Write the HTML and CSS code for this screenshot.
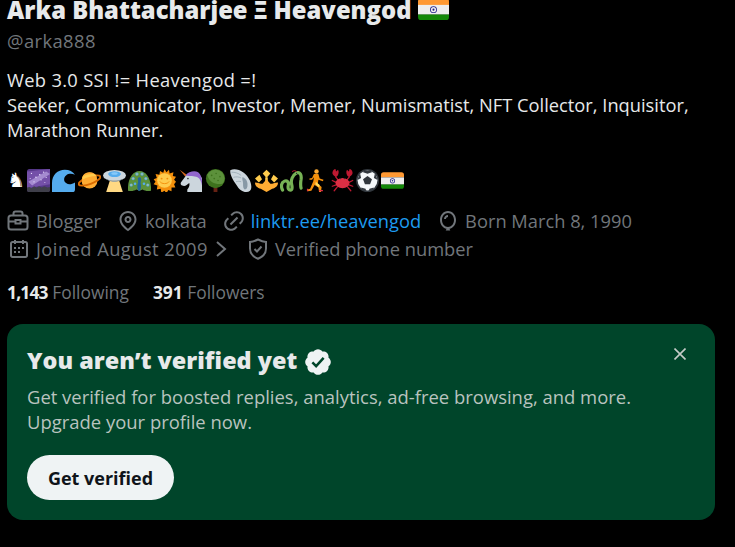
FILE: index.html
```html
<!DOCTYPE html>
<html lang="en">
<head><meta charset="utf-8"><title>Profile</title><link rel="stylesheet" href="styles.css"></head>
<body>
<svg class="sprite" aria-hidden="true">
  <symbol id="e-flag" viewBox="0 0 36 36"><path d="M36 27a4 4 0 0 1-4 4H4a4 4 0 0 1-4-4v-3h36z" fill="#138808"/><path d="M36 13H0V9a4 4 0 0 1 4-4h28a4 4 0 0 1 4 4z" fill="#f93"/><path d="M0 13h36v11H0z" fill="#eee"/><circle cx="18" cy="18.500" r="4" fill="#20208a"/><circle cx="18" cy="18.500" r="3" fill="#eee"/><circle cx="18" cy="18.500" r="1.200" fill="#20208a"/></symbol>
</svg>
<main class="page">
  <h1 class="name">Arka Bhattacharjee Ξ Heavengod <svg class="flag-big" viewBox="0 5 36 26"><use href="#e-flag" width="36" height="36"/></svg></h1>
  <div class="handle">@arka888</div>
  <p class="bio"><span class="bio-first">Web 3.0 SSI != Heavengod =!</span><br>Seeker, Communicator, Investor, Memer, Numismatist, NFT Collector, Inquisitor,<br>Marathon Runner.</p>
  <div class="emojis">
    <span class="knight">♞</span>
    <svg class="emoji" viewBox="0 0 36 36"><rect width="36" height="36" rx="4" fill="#553788"/><path d="M0 4 36 0v24L0 30z" fill="#7450a8"/><path d="M2 20 30 4l6 4L8 26z" fill="#a58bd0"/><g fill="#e8e0ff"><circle cx="7" cy="7" r="1"/><circle cx="14" cy="13" r="1.200"/><circle cx="20" cy="9" r="1.200"/><circle cx="26" cy="5" r="1"/><circle cx="30" cy="13" r="1"/><circle cx="11" cy="20" r="1"/><circle cx="22" cy="17" r="1"/><circle cx="5" cy="15" r=".8"/><circle cx="28" cy="21" r=".8"/></g><path d="M0 32v-3l4-1 3 2 4-3 4 2 4-2 4 2 4-2 5 2 4-1v4a4 4 0 0 1-4 4H4a4 4 0 0 1-4-4z" fill="#3f3f4a"/></svg>
    <svg class="emoji" viewBox="0 0 36 36"><path d="M0 36V22C0 9 9 1 20 1c7 0 13 3 16 8-5-2-10-2-14 1-4 3-4 9 0 12 4 3 9 2 14-1v11a4 4 0 0 1-4 4z" fill="#55acee"/></svg>
    <svg class="emoji" viewBox="0 0 36 36"><circle cx="18" cy="18" r="12.500" fill="#ffac33"/><ellipse cx="18" cy="18" rx="18" ry="5.500" fill="none" stroke="#d96a00" stroke-width="3" transform="rotate(-20 18 18)"/><path d="M6.200 14a12.500 12.500 0 0 1 23.500-1L6.500 20z" fill="#ffac33"/><path d="M8 11.500c6-3 13-4.500 19-3l1.500 2.500C21 11 14 13 7 16.500z" fill="#ffcc4d"/></svg>
    <svg class="emoji" viewBox="0 0 36 36"><path d="M12 14h12l7 22H5z" fill="#ffd983"/><ellipse cx="18" cy="10" rx="18" ry="8.500" fill="#ccd6dd"/><path d="M.5 12c3 4 10 6 17.500 6s14.500-2 17.500-6C33 15 26 20 18 20S3 15 .5 12z" fill="#8899a6"/><ellipse cx="18" cy="8" rx="10" ry="4.500" fill="#55acee"/><ellipse cx="18" cy="7" rx="5" ry="2" fill="#88c9f9"/></svg>
    <svg class="emoji" viewBox="0 0 36 36"><path d="M0 34C-1 16 7 3 18 3s19 13 18 31c-6 1-10 0-13-2l-5 2-5-2c-3 2-7 3-13 2z" fill="#5c913b"/><g fill="#55acee"><circle cx="5" cy="25" r="2.500"/><circle cx="8" cy="15" r="2.500"/><circle cx="14" cy="8" r="2.500"/><circle cx="22" cy="8" r="2.500"/><circle cx="28" cy="15" r="2.500"/><circle cx="31" cy="25" r="2.500"/><circle cx="11" cy="23" r="2"/><circle cx="25" cy="23" r="2"/></g><g fill="#ffcc4d"><circle cx="5" cy="25" r="1"/><circle cx="8" cy="15" r="1"/><circle cx="14" cy="8" r="1"/><circle cx="22" cy="8" r="1"/><circle cx="28" cy="15" r="1"/><circle cx="31" cy="25" r="1"/></g><path d="M18 13c-2 0-3 2-2.500 4 .3 1.500 1 3-.5 7-1 3 0 8 1 10h3c1-3 2-7 1-10-1-3 .8-6 .5-8-.2-2-1.200-3-2.500-3z" fill="#226699"/></svg>
    <svg class="emoji" viewBox="0 0 36 36"><path d="M18 0l3 5 4-4 1 6 6-2-1 6 5 1-3 5 3 3-3 4 2 5-6 0 0 6-5-2-3 5-3-4-5 3-1-6-6 1 1-6-6-2 3-4-3-4 5-2-2-6 6 1 1-6 5 3z" fill="#f4900c"/><circle cx="18" cy="18" r="11.500" fill="#ffcc4d"/><circle cx="13.500" cy="15" r="1.500" fill="#f4900c"/><circle cx="22.500" cy="15" r="1.500" fill="#f4900c"/><path d="M11 20c2 4 12 4 14 0" fill="none" stroke="#f4900c" stroke-width="1.500" stroke-linecap="round"/></svg>
    <svg class="emoji" viewBox="0 0 36 36"><path d="M1 1l11 8-2 3z" fill="#d86a1c"/><path d="M11 10c-2 3-5 7-8 11-1 2 0 4 2 5 2 1 5 1 7-1l4-3c1 3 0 7-3 10v4h24V20c0-6-3-10-9-11-6-2-12-1-17 1z" fill="#ccd6dd"/><path d="M10 10c5-6 14-8 20-5 4 3 6 9 6 15v6c-1-6-3-11-7-13-6-3-11-1-19-3z" fill="#9266cc"/><circle cx="14" cy="15" r="1.300" fill="#292f33"/></svg>
    <svg class="emoji" viewBox="0 0 36 36"><path d="M15 27h6v9h-6z" fill="#662113"/><circle cx="18" cy="15" r="15" fill="#3e721d"/><path d="M18 1c8 0 14 6 14 14 0 3-1 6-3 8C20 25 8 22 5 9c3-5 8-8 13-8z" fill="#5c913b"/><g fill="#3e721d"><circle cx="12" cy="10" r="1.300"/><circle cx="19" cy="7" r="1.300"/><circle cx="25" cy="12" r="1.300"/><circle cx="16" cy="15" r="1.300"/><circle cx="22" cy="18" r="1.300"/></g></svg>
    <svg class="emoji" viewBox="0 0 36 36"><path d="M2 2c6-3 14-1 20 3 7 5 13 14 13 23 0 5-3 8-8 8-6 0-11-4-14-9C8 20 1 10 2 2z" fill="#ccd6dd"/><path d="M21 13c5 1 8 6 8 11s-1 8-4 8c-3-1-3-6-3-9 0-4-2-7-1-10z" fill="#8899a6"/><path d="M4 5c5 0 10 1 15 5M7 13c4-1 8-1 12 1M11 20c3-1 6-1 8 0" stroke="#99aab5" stroke-width="1.300" fill="none"/></svg>
    <svg class="emoji" viewBox="0 0 36 36"><path d="M18 1l6 6-6 7-6-7z" fill="#ffcc4d"/><path d="M16 13h4v8h-4z" fill="#ffcc4d"/><path d="M29 9l7 6-6 6-5-5zM7 9l-7 6 6 6 5-5z" fill="#ffcc4d"/><path d="M0 21c6 0 10 3 12 2l6-7 6 7c2 1 6-2 12-2 0 6-4 8-9 10l-9 5-9-5c-5-2-9-4-9-10z" fill="#ffac33"/></svg>
    <svg class="emoji" viewBox="0 0 36 36"><path d="M4 33c-3-6-2-12 3-14 4-2 7 2 6 6-1 5 0 8 3 8 4 0 3-6 2-10-1-5 1-13 8-17 5-2 8 3 7 10-1 6-1 10 0 14" fill="none" stroke="#77b255" stroke-width="5" stroke-linecap="round" stroke-linejoin="round"/><path d="M26 4c-2-1-3-2-5-1l-2 1" fill="none" stroke="#be1931" stroke-width="1.500"/><circle cx="26" cy="7" r="1" fill="#292f33"/></svg>
    <svg class="emoji" viewBox="0 0 36 36"><circle cx="18" cy="4" r="3.500" fill="#ffac33"/><path d="M14 8h7l2 7 6 2-1 2-7-2-1 6 6 5-1 8h-3l-1-7-6-4-5 9-6 1v-3l4-1 5-12 1-6-3 4-4 0v-2l4-1z" fill="#f4900c"/><path d="M22 33h6v2h-6zM5 31H3v4h2z" fill="#dd2e44"/><path d="M17 20l6 5-1 4-6-5z" fill="#ffdc5d"/></svg>
    <svg class="emoji" viewBox="0 0 36 36"><g fill="none" stroke="#be1931" stroke-width="2" stroke-linecap="round"><path d="M8 21L2 18M8 25l-6 2M10 28l-5 6M28 21l6-3M28 25l6 2M26 28l5 6M11 17L7 12M25 17l4-5"/></g><ellipse cx="18" cy="22" rx="11" ry="8" fill="#dd2e44"/><path d="M9 12c-6-1-8-5-6-9 1-2 3-3 4-3l1 4 3-3c2 3 1 8-2 11zM27 12c6-1 8-5 6-9-1-2-3-3-4-3l-1 4-3-3c-2 3-1 8 2 11z" fill="#be1931"/><circle cx="15" cy="15" r="1" fill="#292f33"/><circle cx="21" cy="15" r="1" fill="#292f33"/></svg>
    <svg class="emoji" viewBox="0 0 36 36"><circle cx="18" cy="18" r="18" fill="#31373d"/><circle cx="18" cy="18" r="15.500" fill="#f5f8fa"/><path d="M18 11l7 5-3 8h-8l-3-8zM18 2.500c3 0 6 .8 8 2l-8 3-8-3c2-1.200 5-2 8-2zM3 17c0-4 1.500-7 3.500-9.500L8 14zM33 17c0-4-1.500-7-3.500-9.500L28 14zM8 29l7 2 1 3.500c-3-.5-6-2-8-5.500zM28 29l-7 2-1 3.500c3-.5 6-2 8-5.500z" fill="#31373d"/></svg>
    <svg class="emoji" viewBox="0 0 36 36"><use href="#e-flag" width="36" height="36"/></svg>
  </div>
  <div class="meta meta-first">
    <span class="item"><svg class="icon" viewBox="0 0 24 24"><rect x="1.500" y="6.500" width="19" height="14" rx="2.500" class="line"/><path d="M6.500 6.500V4.500a2 2 0 0 1 2-2h5a2 2 0 0 1 2 2v2M1.500 12.500h7M13.500 12.500h7M8.500 11h5v3.500h-5z" class="line"/></svg>Blogger</span>
    <span class="item"><svg class="icon" viewBox="0 0 24 24"><path d="M12 7c-1.930 0-3.500 1.570-3.500 3.500S10.070 14 12 14s3.500-1.570 3.500-3.500S13.930 7 12 7zm0 5c-.827 0-1.500-.673-1.500-1.500S11.173 9 12 9s1.500.673 1.500 1.500S12.827 12 12 12zm0-10c-4.687 0-8.500 3.813-8.500 8.500 0 5.967 7.621 11.116 7.945 11.332l.555.370.555-.370c.324-.216 7.945-5.365 7.945-11.332C20.500 5.813 16.687 2 12 2zm0 17.770c-1.665-1.241-6.500-5.196-6.500-9.270C5.500 6.916 8.416 4 12 4s6.500 2.916 6.500 6.500c0 4.073-4.835 8.028-6.500 9.270z"/></svg>kolkata</span>
    <span class="item"><svg class="icon" viewBox="0 0 24 24"><path d="M18.360 5.640c-1.950-1.960-5.110-1.960-7.070 0L9.880 7.050 8.460 5.640l1.420-1.420c2.730-2.730 7.160-2.730 9.900 0 2.730 2.740 2.730 7.170 0 9.900l-1.420 1.420-1.410-1.420 1.410-1.410c1.960-1.960 1.960-5.120 0-7.070zm-2.120 3.530l-7.070 7.070-1.410-1.410 7.070-7.070 1.410 1.410zm-12.020.710l1.420-1.420 1.410 1.420-1.410 1.410c-1.960 1.960-1.960 5.120 0 7.070 1.950 1.960 5.110 1.960 7.070 0l1.410-1.410 1.420 1.410-1.420 1.420c-2.730 2.730-7.160 2.730-9.900 0-2.730-2.740-2.730-7.170 0-9.900z"/></svg><a class="link">linktr.ee/heavengod</a></span>
    <span class="item"><svg class="icon" viewBox="0 0 24 24"><path d="M8 10c0-2.210 1.790-4 4-4v2c-1.100 0-2 .9-2 2H8zm12 1c0 4.270-2.690 8.010-6.550 8.830l.820 1.670H9.730l.820-1.670C6.690 19.010 4 15.270 4 11c0-4.850 3.440-9 8-9s8 4.150 8 9zm-8-7c-3.310 0-6 3.100-6 7s2.690 7 6 7 6-3.100 6-7-2.690-7-6-7z"/></svg>Born March 8, 1990</span>
  </div>
  <div class="meta meta-second">
    <span class="item"><svg class="icon" viewBox="0 0 24 24"><path d="M7 4V3h2v1h6V3h2v1h1.500C19.890 4 21 5.120 21 6.500v12c0 1.380-1.110 2.500-2.500 2.500h-13C4.120 21 3 19.880 3 18.500v-12C3 5.120 4.120 4 5.500 4H7zm0 2H5.500c-.270 0-.500.220-.500.500v12c0 .280.230.500.500.500h13c.280 0 .500-.220.500-.500v-12c0-.280-.220-.500-.500-.500H17v1h-2V6H9v1H7V6zm0 6h2v-2H7v2zm0 4h2v-2H7v2zm4-4h2v-2h-2v2zm0 4h2v-2h-2v2zm4-4h2v-2h-2v2z"/></svg><span class="joined">Joined August 2009</span><svg class="chevron" viewBox="0 0 18 24"><path d="M4 5l8 7-8 7" class="line"/></svg></span>
    <span class="item"><svg class="icon" viewBox="0 0 24 24"><path d="M12 2.500c3 1.500 5.500 2.300 8 2.500v6.500c0 4.800-3.300 8.300-8 10.200-4.700-1.900-8-5.400-8-10.200V5c2.500-.2 5-1 8-2.500z" class="line"/><path d="M8.500 12l2.500 2.500 4.500-5" class="line"/></svg>Verified phone number</span>
  </div>
  <div class="stats"><span><b class="num-tight">1,143</b> Following</span><span><b class="num">391</b> Followers</span></div>
  <section class="card">
    <svg class="close" viewBox="0 0 12 12"><path d="M.5.500l11 11M11.500.500l-11 11"/></svg>
    <h2 class="card-title">You aren’t verified yet <svg class="badge" viewBox="0 0 24 24"><path d="M8.520 3.590c.8-1.100 2.040-1.840 3.480-1.840s2.680.74 3.490 1.840c1.340-.21 2.740.14 3.760 1.160s1.360 2.410 1.160 3.750c1.100.81 1.840 2.060 1.840 3.500s-.74 2.680-1.840 3.490c.2 1.340-.14 2.730-1.160 3.750s-2.410 1.360-3.750 1.160c-.81 1.100-2.060 1.840-3.500 1.840s-2.680-.74-3.490-1.840c-1.340.21-2.740-.14-3.760-1.160-1.010-1.020-1.360-2.410-1.150-3.750C2.490 14.680 1.750 13.430 1.750 12s.74-2.680 1.840-3.490c-.21-1.340.14-2.740 1.160-3.750 1.010-1.020 2.410-1.360 3.770-1.170z" fill="#eff3f4"/><path d="M7.500 12.300l3 3 6-6.600" fill="none" stroke="#00452a" stroke-width="2"/></svg></h2>
    <p class="card-text">Get verified for boosted replies, analytics, ad-free browsing, and more.<br>Upgrade your profile now.</p>
    <button class="cta">Get verified</button>
  </section>
  <nav class="tabs"><span>Posts</span><span>Replies</span><span>Highlights</span><span>Articles</span><span>Media</span><span>Likes</span></nav>
</main>
</body>
</html>
```
FILE: styles.css
```css
html,body{margin:0;background:#000;height:100%;overflow:hidden}
body{font-family:"Open Sans","Liberation Sans",sans-serif;color:#e7e9ea}
.sprite{display:none}
.page{padding:0 20px 0 7px}
.name{margin:-6px 0 0;font-size:23.800px;line-height:32px;font-weight:800;white-space:nowrap}
.flag-big{width:31px;height:22.400px;vertical-align:-1px}
.handle{font-size:18.400px;letter-spacing:.4px;color:#71767b;line-height:24px;margin-top:3px}
.bio{font-size:18.300px;line-height:25px;margin:14px 0 0}
.bio-first{letter-spacing:.34px}
.emojis{display:flex;align-items:center;gap:2.300px;margin-top:26px;height:24px}
.knight{font:20px "DejaVu Sans",sans-serif;width:17.700px;color:#fff;text-align:right}
.emoji{width:23px;height:23px;flex:none}
.meta{display:flex;gap:15px;font-size:18.300px;color:#71767b;line-height:24px}
.meta-first{margin-top:17px}
.meta-second{margin-top:4px}
.joined{letter-spacing:.46px}
.item{display:inline-flex;align-items:center;gap:5px;white-space:nowrap}
.icon{width:24px;height:24px;fill:#71767b;flex:none}
.line{fill:none;stroke:#71767b;stroke-width:2}
.chevron{width:18px;height:24px;flex:none}
.link{color:#1d9bf0}
.stats{display:flex;gap:24px;font-size:17.400px;line-height:24px;color:#71767b;margin-top:19px}
.num{color:#e7e9ea}
.num-tight{color:#e7e9ea;letter-spacing:-.8px}
.card{position:relative;background:#00452a;border-radius:16px;width:708px;height:196px;padding:20px;box-sizing:border-box;margin-top:20px}
.close{position:absolute;top:24px;right:29px;width:12px;height:12px;fill:none;stroke:#c5cbc8;stroke-width:1.600}
.card-title{margin:0;font-size:23.400px;line-height:32px;font-weight:800;white-space:nowrap}
.badge{width:30px;height:30px;vertical-align:-8px}
.card-text{margin:7px 0 0;font-size:18.450px;line-height:25px;color:#b9c3bf}
.cta{display:block;border:0;border-radius:23px;background:#eff3f4;color:#0f1419;height:45px;width:147px;margin-top:21px;padding:0;font:700 18px "Open Sans",sans-serif}
.tabs{display:flex;gap:44px;margin:25px 0 0 32px;font-size:18px;line-height:24px;color:#71767b;white-space:nowrap}
```
